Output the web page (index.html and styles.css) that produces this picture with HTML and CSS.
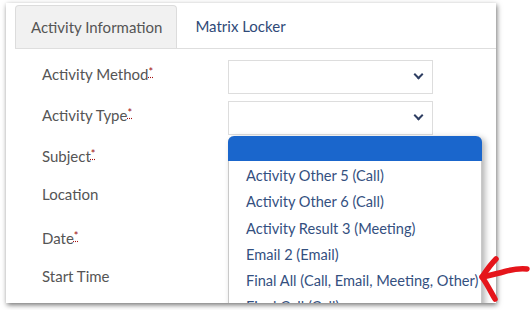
FILE: index.html
```html
<!DOCTYPE html>
<html lang="en">
<head>
  <meta charset="UTF-8" />
  <title>Activity</title>
  <link rel="stylesheet" href="styles.css">
</head>
<body>
  <div class="shot">
    <div class="tabs">
      <div class="tab active">Activity Information</div>
      <div class="tab">Matrix Locker</div>
    </div>

    <div class="form">
      <label>Activity Method<abbr class="req" title="required">*</abbr></label>
      <div class="select"><span class="chev"></span></div>

      <label>Activity Type<abbr class="req" title="required">*</abbr></label>
      <div class="select"><span class="chev"></span></div>

      <label>Subject<abbr class="req" title="required">*</abbr></label>
      <div></div>

      <label>Location</label>
      <div></div>

      <label>Date<abbr class="req" title="required">*</abbr></label>
      <div></div>

      <label>Start Time</label>
      <div></div>
    </div>

    <!-- open list of the Activity Type select -->
    <ul class="menu">
      <li class="selected"></li>
      <li>Activity Other 5 (Call)</li>
      <li>Activity Other 6 (Call)</li>
      <li>Activity Result 3 (Meeting)</li>
      <li>Email 2 (Email)</li>
      <li>Final All (Call, Email, Meeting, Other)</li>
      <li>Final Call (Call)</li>
    </ul>
  </div>

  <svg class="arrow" width="52" height="52" viewBox="0 0 52 52">
    <path d="M49 17 C41 16 32 18 25 20 C17 22 10 24 4 25" fill="none" stroke="#e5151b" stroke-width="5.5" stroke-linecap="round"/>
    <path d="M18 7 C13 12 8 19 4 25 C9 32 13 40 17 47" fill="none" stroke="#e5151b" stroke-width="5.5" stroke-linecap="round" stroke-linejoin="round"/>
  </svg>
</body>
</html>
```

FILE: styles.css
```css
body {
  margin: 0;
  background: #ffffff;
  font-family: Lato, 'Liberation Sans', sans-serif;
  width: 531px;
  height: 310px;
  position: relative;
  overflow: hidden;
}

.shot {
  position: relative;
  margin: 3px 0 0 6px;
  width: 490px;
  height: 300px;
  overflow: hidden;
  background: #ffffff;
  box-shadow: 1px 2px 5px rgba(0, 0, 0, 0.55);
}

.tabs {
  display: flex;
  margin: 2px 0 0 9px;
  border-bottom: 1px solid #dedede;
  height: 43px;
}

.tab {
  padding: 0 15px;
  line-height: 43px;
  font-size: 15px;
  color: #2f4a78;
}

.tab.active {
  background: #f1f1f1;
  color: #555555;
  border: 1px solid #dcdcdc;
  border-bottom: none;
  border-radius: 4px 4px 0 0;
  line-height: 42px;
  padding: 0 14px 0 15px;
  margin-right: 3px;
}

.form {
  display: grid;
  grid-template-columns: 186px 205px;
  grid-auto-rows: 34px;
  row-gap: 7px;
  margin: 11px 0 0 36px;
}

.form label {
  font-size: 15px;
  color: #555555;
  line-height: 23px;
}

.req {
  color: #a11010;
  font-size: 11px;
  vertical-align: 4px;
  text-decoration: underline dotted #a11010;
}

.select {
  border: 1px solid #dddddd;
  position: relative;
}

.chev {
  position: absolute;
  right: 10px;
  top: 10px;
  width: 5px;
  height: 5px;
  border-right: 2.5px solid #2e3e62;
  border-bottom: 2.5px solid #2e3e62;
  transform: rotate(45deg);
}

.menu {
  position: absolute;
  left: 222px;
  top: 133px;
  width: 252px;
  margin: 0;
  padding: 0;
  list-style: none;
  background: #ffffff;
  border: 1px solid #c9c9c9;
  border-top: none;
  border-radius: 6px 6px 0 0;
  box-shadow: 3px 2px 6px rgba(0, 0, 0, 0.3);
}

.menu li {
  height: 26.25px;
  line-height: 29px;
  padding-left: 17px;
  font-size: 14.6px;
  color: #34507f;
  white-space: nowrap;
}

.menu li.selected {
  background: #1a66cc;
  height: 25px;
  border-radius: 6px 6px 0 0;
  margin: 0 -1px;
}

.arrow {
  position: absolute;
  left: 478px;
  top: 252px;
}
```
